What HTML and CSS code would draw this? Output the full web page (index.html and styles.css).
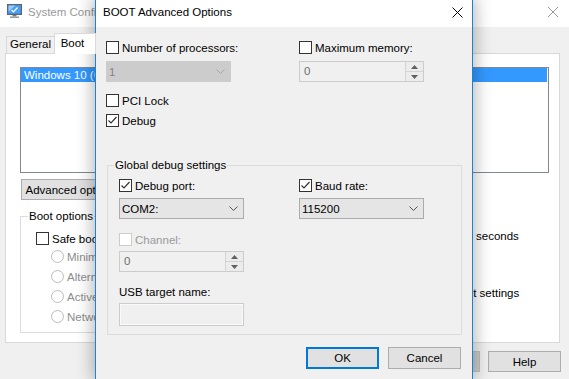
FILE: index.html
```html
<!DOCTYPE html>
<html lang="en">
<head>
    <meta charset="UTF-8">
    <meta name="viewport" content="width=device-width, initial-scale=1.0">
    <title>BOOT Advanced Options</title>
    <link rel="stylesheet" href="styles.css">
</head>
<body>
    <!-- background window: System Configuration -->
    <div class="sysconf">
        <div class="titlebar">
            <svg class="app-icon" width="15" height="14" viewBox="0 0 15 14">
                <rect x="0.5" y="0.5" width="14" height="10" fill="#3a7fd0" stroke="#5c6670"/>
                <rect x="1.5" y="1.5" width="12" height="8" fill="#4d9ef0"/>
                <path d="M1.5 1.5h7l-7 6z" fill="#9ccaf7"/>
                <path d="M4.5 6l2 2 4-4.5" fill="none" stroke="#fff" stroke-width="1.2"/>
                <rect x="5.5" y="11" width="4" height="1.5" fill="#707a84"/>
                <rect x="3" y="12.5" width="9" height="1.5" fill="#959ea7"/>
            </svg>
            <span class="title">System Configuration</span>
            <span class="close">
                <svg width="10" height="10" viewBox="0 0 10 10"><path d="M0 0L10 10M10 0L0 10" stroke="#999" stroke-width="1"/></svg>
            </span>
        </div>
        <div class="client">
            <div class="tabs">
                <div class="tab">General</div>
                <div class="tab active">Boot</div>
                <div class="tab">Services</div>
                <div class="tab">Startup</div>
                <div class="tab">Tools</div>
            </div>
            <div class="tab-panel">
                <div class="listbox">
                    <div class="list-item selected">Windows 10 (C:\Windows) : Current OS; Default OS</div>
                </div>
                <div class="panel-buttons">
                    <button class="btn wide">Advanced options...</button>
                    <button class="btn wide">Set as default</button>
                    <button class="btn">Delete</button>
                </div>
                <div class="boot-row">
                    <div class="group boot-options">
                        <div class="group-label">Boot options</div>
                        <div class="check safe-boot"><span class="box"></span><span>Safe boot</span></div>
                        <div class="radio-row"><span class="radio"></span><span>Minimal</span></div>
                        <div class="radio-row"><span class="radio"></span><span>Alternate shell</span></div>
                        <div class="radio-row"><span class="radio"></span><span>Active Directory repair</span></div>
                        <div class="radio-row"><span class="radio"></span><span>Network</span></div>
                    </div>
                    <div class="timeout-col">
                        <div class="timeout-label">Timeout:</div>
                        <div class="timeout-row">
                            <span class="textbox timeout-input">30</span>
                            <span>seconds</span>
                        </div>
                        <div class="check permanent"><span class="box"></span><span class="wrap-label">Make all boot settings permanent</span></div>
                    </div>
                </div>
            </div>
            <div class="window-buttons">
                <button class="btn">OK</button>
                <button class="btn">Cancel</button>
                <button class="btn disabled">Apply</button>
                <button class="btn">Help</button>
            </div>
        </div>
    </div>

    <!-- modal dialog on top -->
    <div class="dialog">
        <div class="titlebar dlg-titlebar">
            <span class="dlg-title">BOOT Advanced Options</span>
            <span class="close close-small">
                <svg width="11" height="11" viewBox="0 0 11 11"><path d="M0.5 0.5L10.5 10.5M10.5 0.5L0.5 10.5" stroke="#000" stroke-width="1"/></svg>
            </span>
        </div>
        <div class="dlg-body">
            <div class="cols top-cols">
                <div class="col">
                    <div class="check"><span class="box"></span><span>Number of processors:</span></div>
                    <div class="combo disabled top-field"><span>1</span>
                        <svg width="9" height="5" viewBox="0 0 9 5"><path d="M0.5 0.5L4.5 4.5L8.5 0.5" fill="none" stroke="#a8a8a8"/></svg>
                    </div>
                    <div class="check pci"><span class="box"></span><span>PCI Lock</span></div>
                    <div class="check debug"><span class="box"><svg width="11" height="11" viewBox="0 0 11 11"><path d="M1.5 5.5L4 8L9.5 2" fill="none" stroke="#333" stroke-width="1.2"/></svg></span><span>Debug</span></div>
                </div>
                <div class="col">
                    <div class="check"><span class="box"></span><span>Maximum memory:</span></div>
                    <div class="spin top-field">
                        <span class="spin-value">0</span>
                        <span class="spin-buttons">
                            <span class="spin-btn"><svg width="7" height="4" viewBox="0 0 7 4"><path d="M0 4L3.5 0L7 4Z" fill="#606060"/></svg></span>
                            <span class="spin-btn"><svg width="7" height="4" viewBox="0 0 7 4"><path d="M0 0L3.5 4L7 0Z" fill="#606060"/></svg></span>
                        </span>
                    </div>
                </div>
            </div>

            <div class="group debug-settings">
                <div class="group-label">Global debug settings</div>
                <div class="cols group-cols">
                    <div class="col">
                        <div class="check"><span class="box"><svg width="11" height="11" viewBox="0 0 11 11"><path d="M1.5 5.5L4 8L9.5 2" fill="none" stroke="#333" stroke-width="1.2"/></svg></span><span>Debug port:</span></div>
                        <div class="combo group-field"><span>COM2:</span>
                            <svg width="9" height="5" viewBox="0 0 9 5"><path d="M0.5 0.5L4.5 4.5L8.5 0.5" fill="none" stroke="#555"/></svg>
                        </div>
                        <div class="check channel off"><span class="box"></span><span>Channel:</span></div>
                        <div class="spin channel-field">
                            <span class="spin-value">0</span>
                            <span class="spin-buttons">
                                <span class="spin-btn"><svg width="7" height="4" viewBox="0 0 7 4"><path d="M0 4L3.5 0L7 4Z" fill="#606060"/></svg></span>
                                <span class="spin-btn"><svg width="7" height="4" viewBox="0 0 7 4"><path d="M0 0L3.5 4L7 0Z" fill="#606060"/></svg></span>
                            </span>
                        </div>
                        <div class="usb-label">USB target name:</div>
                        <div class="textbox usb-field"></div>
                    </div>
                    <div class="col">
                        <div class="check"><span class="box"><svg width="11" height="11" viewBox="0 0 11 11"><path d="M1.5 5.5L4 8L9.5 2" fill="none" stroke="#333" stroke-width="1.2"/></svg></span><span>Baud rate:</span></div>
                        <div class="combo group-field"><span>115200</span>
                            <svg width="9" height="5" viewBox="0 0 9 5"><path d="M0.5 0.5L4.5 4.5L8.5 0.5" fill="none" stroke="#555"/></svg>
                        </div>
                    </div>
                </div>
            </div>

            <div class="dlg-buttons">
                <button class="btn default">OK</button>
                <button class="btn">Cancel</button>
            </div>
        </div>
    </div>
</body>
</html>
```

FILE: styles.css
```css
body {
    margin: 0;
    width: 569px;
    height: 379px;
    overflow: hidden;
    position: relative;
    background: #f0f0f0;
    font-family: "Liberation Sans", Arial, sans-serif;
    font-size: 11.5px;
    line-height: 14px;
    color: #000;
}
.sysconf {
    width: 576px;
    height: 379px;
    background: #f0f0f0;
}
.titlebar {
    display: flex;
    align-items: center;
    height: 27px;
    box-sizing: border-box;
    padding-bottom: 3px;
    background: #fff;
}
.sysconf .titlebar {
    padding-left: 7px;
}
.app-icon {
    margin-right: 6px;
    margin-top: -2px;
}
.title {
    color: #999;
}
.close {
    margin-left: auto;
    width: 46px;
    display: flex;
    justify-content: center;
}
.close-small {
    width: 29px;
}
.client {
    padding: 6px 0 0 5px;
}
.tabs {
    display: flex;
    align-items: flex-end;
    height: 20px;
    margin-left: 1px;
}
.tab {
    width: 49px;
    height: 17px;
    box-sizing: border-box;
    border: 1px solid #d9d9d9;
    border-bottom: none;
    text-align: center;
    line-height: 15px;
    background: #f0f0f0;
}
.tab + .tab {
    margin-left: -1px;
}
.tab.active {
    position: relative;
    z-index: 1;
    width: 42px;
    height: 21px;
    margin-bottom: -1px;
    padding-right: 5px;
    line-height: 19px;
    background: #fff;
}
.tab-panel {
    width: 555px;
    height: 290px;
    box-sizing: border-box;
    border: 1px solid #d9d9d9;
    background: #fff;
    padding: 13px 0 0 14px;
}
.listbox {
    width: 529px;
    height: 106px;
    box-sizing: border-box;
    border: 1px solid #828790;
    background: #fff;
}
.list-item {
    height: 14px;
    margin-right: 1px;
    padding-left: 3px;
    white-space: nowrap;
    overflow: hidden;
}
.list-item.selected {
    background: #3399ff;
    color: #fff;
}
.panel-buttons {
    display: flex;
    gap: 8px;
    margin: 6px 0 0 1px;
}
.btn {
    width: 73px;
    height: 22px;
    box-sizing: border-box;
    border: 1px solid #adadad;
    background: #e1e1e1;
    font: inherit;
    color: #000;
    padding: 0;
}
.panel-buttons .btn {
    height: 21px;
}
.btn.wide {
    width: 110px;
}
.btn.disabled {
    background: #cccccc;
    border-color: #bfbfbf;
    color: #838383;
}
.btn.default {
    border: 2px solid #0078d7;
}
.boot-row {
    display: flex;
    margin-top: 16px;
}
.group {
    border: 1px solid #dcdcdc;
    box-sizing: border-box;
}
.group-label {
    width: max-content;
    margin-top: -8px;
    padding: 0 1px;
    background: #f0f0f0;
}
.boot-options {
    width: 340px;
    height: 117px;
    padding-left: 15px;
}
.boot-options .group-label {
    margin-left: -8px;
    background: #fff;
}
.safe-boot {
    margin-top: 9px;
}
.radio-row {
    display: flex;
    align-items: center;
    gap: 3px;
    height: 13px;
    margin: 7px 0 0 15px;
    color: #8d8d8d;
}
.safe-boot + .radio-row {
    margin-top: 5px;
}
.radio {
    width: 13px;
    height: 13px;
    box-sizing: border-box;
    border: 1px solid #bcbcbc;
    border-radius: 50%;
    background: #fff;
}
.timeout-col {
    margin-left: 23px;
}
.timeout-label {
    margin-top: -7px;
}
.timeout-row {
    display: flex;
    align-items: center;
    gap: 8px;
    margin-top: 2px;
}
.timeout-input {
    width: 85px;
    height: 21px;
    background: #fff;
    border-color: #7a7a7a;
    padding-left: 3px;
}
.check.permanent {
    align-items: flex-start;
    height: auto;
    margin: 40px 0 0 9px;
    white-space: normal;
}
.wrap-label {
    width: 125px;
}
.window-buttons {
    display: flex;
    justify-content: flex-end;
    gap: 8px;
    width: 556px;
    margin-top: 8px;
}
.window-buttons .btn {
    height: 21px;
}

/* dialog window */
.dialog {
    position: absolute;
    left: 95px;
    top: -1px;
    width: 378px;
    height: 380px;
    box-sizing: border-box;
    border: 1px solid #1883d7;
    border-bottom: none;
    background: #f0f0f0;
    box-shadow: 0 0 16px 2px rgba(0, 0, 0, 0.3);
}
.dlg-titlebar {
    padding-left: 7px;
}
.dlg-body {
    padding: 14px 11px 0 10px;
}
.cols {
    display: flex;
}
.top-cols {
    gap: 68px;
}
.group-cols {
    gap: 55px;
}
.col {
    width: 125px;
}
.check {
    display: flex;
    align-items: center;
    gap: 3px;
    height: 13px;
    white-space: nowrap;
}
.box {
    flex: none;
    width: 13px;
    height: 13px;
    box-sizing: border-box;
    border: 1px solid #333;
    background: #fff;
}
.box svg {
    display: block;
}
.check.off {
    color: #9a9a9a;
}
.check.off .box {
    border-color: #cccccc;
}
.combo {
    display: flex;
    align-items: center;
    justify-content: space-between;
    height: 21px;
    box-sizing: border-box;
    border: 1px solid #acacac;
    background: #e5e5e5;
    padding: 0 5px 0 2px;
}
.combo.disabled {
    background: #cccccc;
    border-color: #cccccc;
    color: #838383;
}
.top-field {
    margin-top: 7px;
}
.pci {
    margin-top: 12px;
}
.debug {
    margin-top: 7px;
}
.spin {
    display: flex;
    height: 21px;
    box-sizing: border-box;
    border: 1px solid #cccccc;
    background: #f0f0f0;
    color: #6d6d6d;
}
.spin-value {
    flex: 1;
    padding-left: 4px;
    line-height: 19px;
}
.spin-buttons {
    display: flex;
    flex-direction: column;
    width: 17px;
    border-left: 1px solid #d4d4d4;
}
.spin-btn {
    flex: 1;
    display: flex;
    align-items: center;
    justify-content: center;
    background: #ececec;
}
.spin-btn + .spin-btn {
    border-top: 1px solid #d4d4d4;
}
.debug-settings {
    width: 355px;
    margin: 38px 0 0 1px;
    padding: 0 11px 8px 11px;
}
.debug-settings .group-label {
    margin-left: -5px;
}
.group-cols {
    margin-top: 7px;
}
.group-field {
    margin-top: 6px;
}
.channel {
    margin-top: 14px;
}
.channel-field {
    margin-top: 5px;
}
.usb-label {
    margin-top: 13px;
}
.textbox {
    display: flex;
    align-items: center;
    box-sizing: border-box;
    border: 1px solid #cccccc;
}
.usb-field {
    height: 23px;
    margin-top: 4px;
    background: #f0f0f0;
    box-shadow: inset 0 0 0 1px #fafafa;
}
.dlg-buttons {
    display: flex;
    justify-content: flex-end;
    gap: 9px;
    margin-top: 12px;
}
```
